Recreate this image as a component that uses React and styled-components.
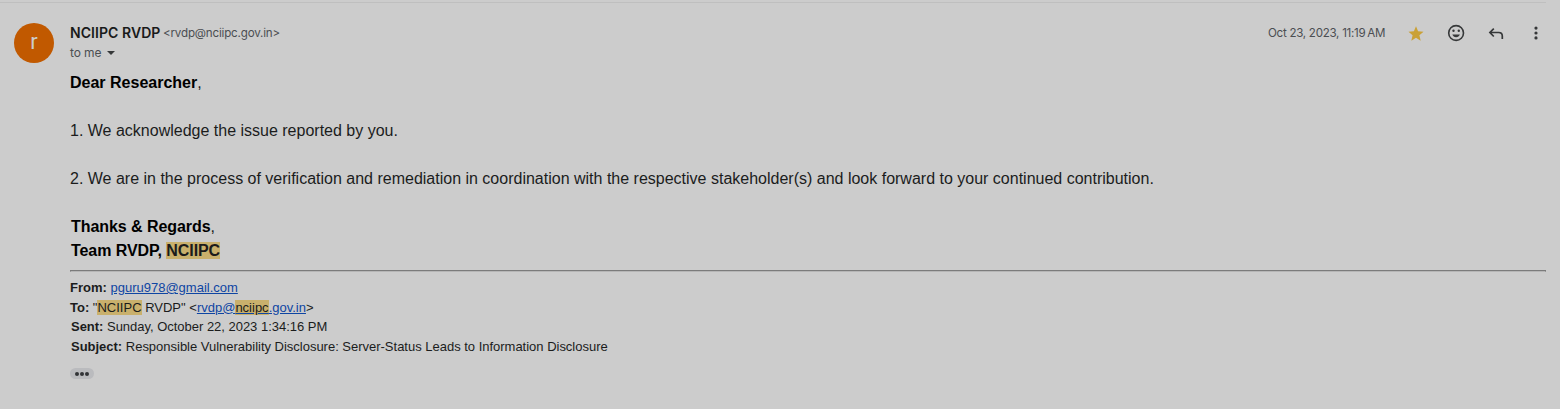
import React from "react";
import styled, { createGlobalStyle } from "styled-components";

const Global = createGlobalStyle`
  * { box-sizing: border-box; }
  body { margin: 0; background: #cccccc; }
`;

const Message = styled.article`
  width: 1560px;
  height: 409px;
  padding-right: 14px;
  background: #cccccc;
  overflow: hidden;
  font-family: "Liberation Sans", Arial, sans-serif;
`;

const TopRule = styled.div`
  height: 1px;
  margin-top: 2px;
  background: #bfbfbf;
`;

const Columns = styled.div`
  display: flex;
  padding: 20px 0 0 14px;
`;

const Avatar = styled.div`
  flex: none;
  width: 40px;
  height: 40px;
  margin-right: 16px;
  border-radius: 50%;
  background: #c15900;
  color: #cccccc;
  font: 400 22px/38px Roboto, sans-serif;
  text-align: center;
`;

const Main = styled.div`
  flex: 1;
  min-width: 0;
`;

const Header = styled.header`
  display: flex;
  justify-content: space-between;
  height: 20px;
`;

const Sender = styled.div`
  display: flex;
  font: 13px/20px Inter, sans-serif;
  color: #4b4e52;
  white-space: nowrap;
`;

const Name = styled.span`
  width: 93px;
  font-size: 14px;
  font-weight: 600;
  letter-spacing: 0.06px;
  color: #191a1a;
`;

const Address = styled.span`
  font-size: 11.6px;
  letter-spacing: -0.18px;
`;

const Meta = styled.div`
  display: flex;
  align-items: center;
  color: #363839;
`;

const DateText = styled.time`
  width: 118px;
  margin-right: 20px;
  font: 11.6px/20px Inter, sans-serif;
  letter-spacing: -0.28px;
  color: #4b4e52;
  white-space: nowrap;
`;

const Icon = styled.svg`
  display: block;
  width: 20px;
  height: 20px;
  margin-right: ${(p) => (p.$last ? 0 : 20)}px;
  fill: ${(p) => p.$fill || "currentColor"};
`;

const Recipient = styled.div`
  display: flex;
  align-items: center;
  height: 20px;
  font: 12px/20px Inter, sans-serif;
  letter-spacing: -0.1px;
  color: #4b4e52;
`;

const Caret = styled.span`
  margin-left: 6px;
  border: 4px solid transparent;
  border-top-color: #363839;
  border-bottom: 0;
`;

const Body = styled.div`
  margin-top: 8px;
  font-size: 16px;
  line-height: 24px;
  color: #1b1c1c;
  b { color: #000; }
`;

const Line = styled.p`
  margin: 0 0 ${(p) => (p.$gap ? 24 : 0)}px;
  padding-left: ${(p) => p.$indent || 0}px;
  letter-spacing: ${(p) => p.$track || 0}px;
  white-space: nowrap;
`;

const Mark = styled.mark`
  background: #c9b06c;
  color: #1b1b1b;
`;

const Divider = styled.hr`
  height: 2px;
  margin: 7px 0 6px;
  border: 1px solid #7b7b7b;
  border-bottom-color: #b6b6b6;
`;

const Quoted = styled.div`
  font-size: 13px;
  line-height: 19.5px;
  color: #1b1c1c;
`;

const Link = styled.a`
  color: #0e45a3;
  text-decoration: underline;
`;

const More = styled.button`
  display: flex;
  align-items: center;
  justify-content: center;
  gap: 1px;
  width: 24px;
  height: 11px;
  margin-top: 12px;
  padding: 0;
  border: 0;
  border-radius: 6px;
  background: #babbbe;
`;

const Dot = styled.i`
  width: 4px;
  height: 4px;
  border-radius: 50%;
  background: #323437;
`;

export default function App() {
  return (
    <>
      <Global />
      <Message>
        <TopRule />
        <Columns>
          <Avatar>r</Avatar>
          <Main>
            <Header>
              <Sender>
                <Name>NCIIPC RVDP</Name>
                <Address>&lt;rvdp@nciipc.gov.in&gt;</Address>
              </Sender>
              <Meta>
                <DateText>Oct 23, 2023, 11:19{"\u202f"}AM</DateText>
                <Icon viewBox="0 0 24 24" $fill="#caa136">
                  <path d="M12 17.8 17.6 21.2 16.1 14.8 21 10.5 14.5 10 12 4 9.5 10 3 10.5 7.9 14.8 6.4 21.2Z" />
                </Icon>
                <Icon viewBox="0 0 20 20">
                  <circle cx="10.1" cy="10" r="7.4" fill="none" stroke="currentColor" strokeWidth="1.6" />
                  <circle cx="7.5" cy="7.8" r="1.2" />
                  <circle cx="12.8" cy="7.8" r="1.2" />
                  <path d="M6.3 11.6h7.6c-.6 1.6-2 2.6-3.8 2.6s-3.2-1-3.8-2.6Z" />
                </Icon>
                <Icon viewBox="0 0 20 20">
                  <path d="M7.8 5.6 3.9 9.5l3.9 4M4 9.5h8.7c2.2 0 3.6 1.4 3.6 3.6v3" fill="none" stroke="currentColor" strokeWidth="1.7" />
                </Icon>
                <Icon viewBox="0 0 20 20" $last>
                  <circle cx="10" cy="5.1" r="1.6" />
                  <circle cx="10" cy="10" r="1.6" />
                  <circle cx="10" cy="14.9" r="1.6" />
                </Icon>
              </Meta>
            </Header>
            <Recipient>
              to me
              <Caret />
            </Recipient>
            <Body>
              <Line $gap><b>Dear Researcher</b>,</Line>
              <Line $gap>1. We acknowledge the issue reported by you.</Line>
              <Line $gap>
                2. We are in the process of verification and remediation in coordination with the respective stakeholder(s) and look forward to your continued contribution.
              </Line>
              <Line $indent={1} $track={-0.06}><b>Thanks &amp; Regards</b>,</Line>
              <Line $indent={1} $track={-0.07}><b>Team RVDP, <Mark>NCIIPC</Mark></b></Line>
            </Body>
            <Divider />
            <Quoted>
              <Line><b>From:</b> <Link>pguru978@gmail.com</Link></Line>
              <Line>
                <b>To:</b> "<Mark>NCIIPC</Mark> RVDP" &lt;<Link>rvdp@<Mark>nciipc</Mark>.gov.in</Link>&gt;
              </Line>
              <Line $indent={1} $track={-0.02}><b>Sent:</b> Sunday, October 22, 2023 1:34:16 PM</Line>
              <Line $indent={1} $track={-0.012}>
                <b>Subject:</b> Responsible Vulnerability Disclosure: Server-Status Leads to Information Disclosure
              </Line>
            </Quoted>
            <More aria-label="Show trimmed content"><Dot /><Dot /><Dot /></More>
          </Main>
        </Columns>
      </Message>
    </>
  );
}
